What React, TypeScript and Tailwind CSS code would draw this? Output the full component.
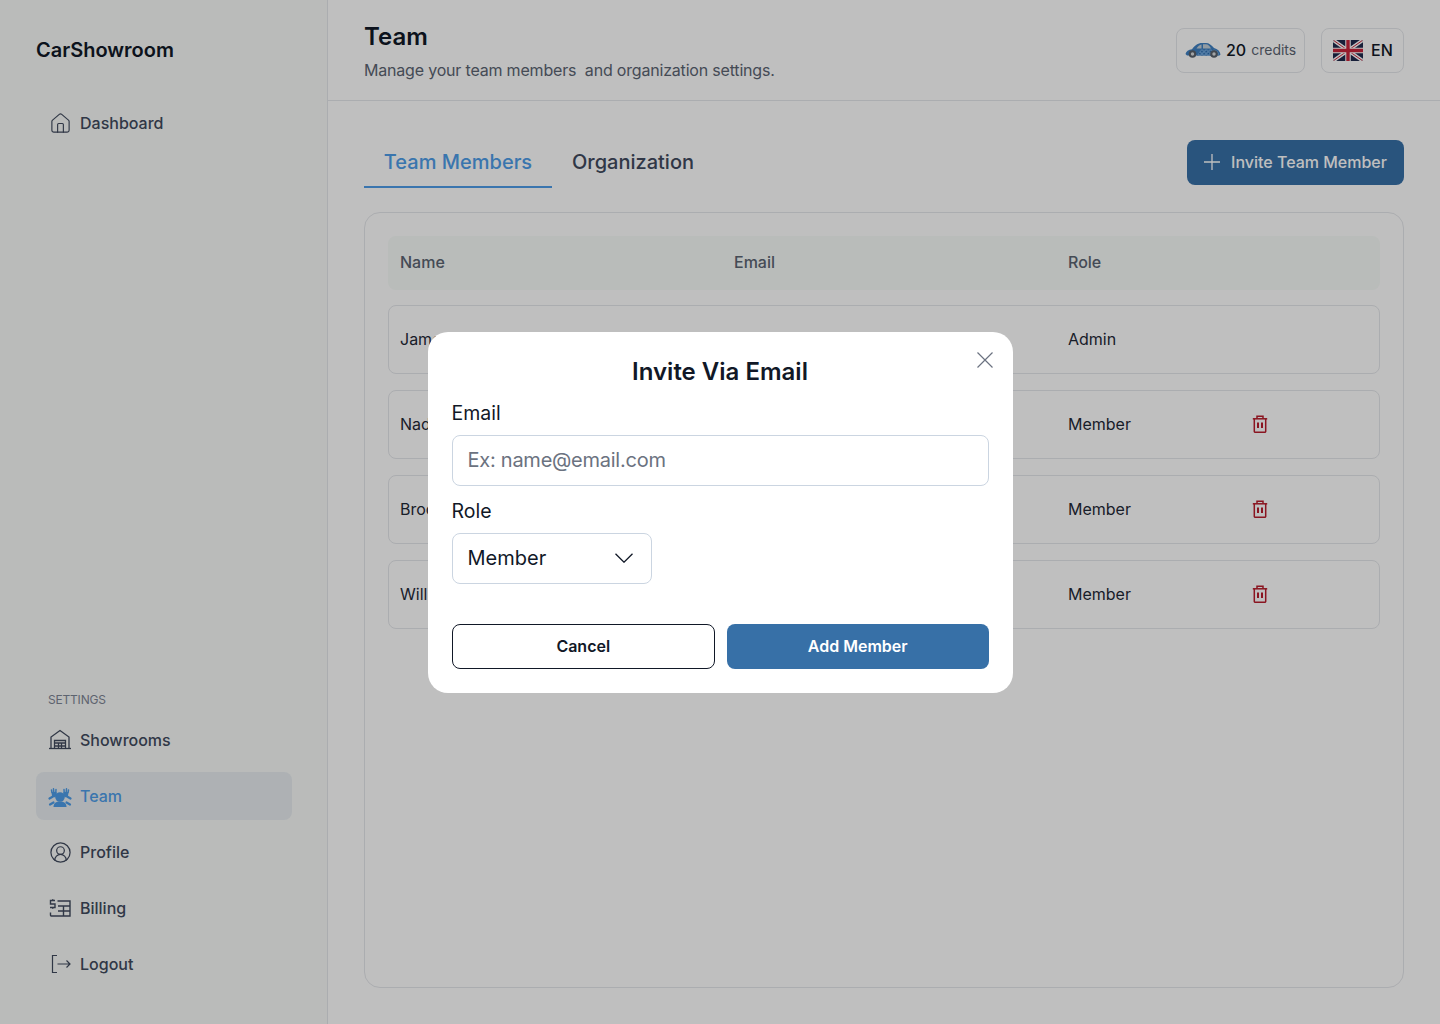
import { CircleUserRound, Home } from 'lucide-react'
import type { ReactNode } from 'react'

const font = 'font-["Inter","Open_Sans",sans-serif]'

function GarageIcon() {
  return (
    <svg width="24" height="24" viewBox="0 0 24 24" fill="none" stroke="currentColor" strokeWidth="1.3">
      <path d="M1 20.500h22" />
      <path d="M3 20.500V9L12 2.500 21 9v11.500" />
      <path d="M6.500 20.500v-8h11v8" />
      <path d="M6.500 15h11M6.500 18h11M10.500 15v5.500M13.500 15v5.500" />
    </svg>
  )
}

function TeamIcon() {
  return (
    <svg width="24" height="24" viewBox="0 0 24 24" fill="currentColor">
      <circle cx="12" cy="13" r="4.800" />
      <path d="M5.500 23c0-3.800 2.500-5.500 6.500-5.500s6.500 1.700 6.500 5.500z" />
      <path d="M3.500 8h5l.5 3-2 2.500-3-1.500zM20.500 8h-5l-.5 3 2 2.500 3-1.500z" />
      <g fill="none" stroke="currentColor" strokeLinecap="round">
        <path strokeWidth="1.500" d="M4 8.500 3.500 6M5.800 8 5.500 4.800M7.800 8.500 8 5.500M20 8.500 20.500 6M18.200 8 18.500 4.800M16.200 8.500 16 5.500" />
        <path strokeWidth="2.200" d="M1.500 14.500 5 12.500M22.500 14.500 19 12.500" />
        <path strokeWidth="2.200" d="M2 20.500 5.500 18.500M22 20.500 18.500 18.500" />
      </g>
    </svg>
  )
}

function BillingIcon() {
  return (
    <svg width="24" height="24" viewBox="0 0 24 24" fill="none" stroke="currentColor" strokeWidth="1.400">
      <path d="M9.500 5H22v15H3.500a1 1 0 0 1-1-1v-2.500" />
      <path d="M10 10h12M10 15h12M15.500 10v10" />
      <path d="M7 4.500H2.500v3.500H7v3.500H2" />
      <path d="M4.800 3v1.500M4.800 11.500V13" strokeWidth="1" />
    </svg>
  )
}

function LogoutIcon() {
  return (
    <svg width="24" height="24" viewBox="0 0 24 24" fill="none" stroke="currentColor" strokeWidth="1.200">
      <path d="M9 3.500H4.500v17H9" />
      <path d="M9.500 12H22M18.500 8.500 22 12l-3.500 3.500" />
    </svg>
  )
}

function TrashIcon() {
  return (
    <svg width="16" height="18" viewBox="0 0 16 18" fill="none" stroke="#b91c2c" strokeWidth="1.500">
      <path d="M.8 3.800h14.400" />
      <path d="M5 3.500V1.200h6v2.300" />
      <path d="M2.300 3.800v12.700a.8.8 0 0 0 .8.8h9.800a.8.8 0 0 0 .8-.8V3.800" />
      <path d="M6 7.500v5.500M10 7.500v5.500" strokeWidth="2" />
    </svg>
  )
}

function CarIcon() {
  return (
    <svg width="36" height="16" viewBox="0 0 36 16">
      <defs>
        <pattern id="mosaic" width="3" height="3" patternUnits="userSpaceOnUse" patternTransform="rotate(45)">
          <rect width="3" height="3" fill="#6ea6dc" />
          <rect width="1.500" height="1.500" fill="#1f5fa5" />
        </pattern>
      </defs>
      <path d="M.5 12c.5-2.500 3-4.200 6.500-4.700C9.500 3.500 13 1 17 1h4c3 0 5.500 2 8 5 3.500 1 6 3 6.500 6.500l-1 1H2z" fill="#3f80c2" />
      <path d="M16 7.500h13c2 .5 4 1.500 5 4l-.5 2H12z" fill="url(#mosaic)" />
      <path d="M11.500 6.500c1.500-2.200 3-3.700 5-4v4zM18 2.300h3c2 0 3.800 2 5 4.200h-8z" fill="#c3cfd8" />
      <circle cx="7.500" cy="12" r="3.800" fill="#59606b" />
      <circle cx="7.500" cy="12" r="1.700" fill="#d8dbde" />
      <circle cx="29" cy="12" r="3.800" fill="#59606b" />
      <circle cx="29" cy="12" r="1.700" fill="#d8dbde" />
    </svg>
  )
}

function FlagIcon() {
  return (
    <svg width="30" height="21" viewBox="0 0 30 21">
      <defs>
        <clipPath id="flagClip">
          <rect width="30" height="21" rx="2" />
        </clipPath>
      </defs>
      <g clipPath="url(#flagClip)">
        <rect width="30" height="21" fill="#1f2a4d" />
        <path d="M0 0l30 21M30 0L0 21" stroke="#fff" strokeWidth="3.600" />
        <path d="M0 0l30 21M30 0L0 21" stroke="#c8233a" strokeWidth="1" />
        <path d="M15 0v21M0 10.500h30" stroke="#fff" strokeWidth="5.500" />
        <path d="M15 0v21M0 10.500h30" stroke="#c8233a" strokeWidth="3.400" />
      </g>
    </svg>
  )
}

function NavItem({ icon, label, active }: { icon: ReactNode; label: string; active?: boolean }) {
  return (
    <div
      className={`flex h-12 items-center gap-2 rounded-lg pl-3 text-base font-medium ${
        active ? 'bg-[#e8edf1] text-[#4e9de8]' : 'text-[#414a5e]'
      }`}
    >
      <span className="flex h-6 w-6 items-center justify-center">{icon}</span>
      {label}
    </div>
  )
}

const members = [
  { name: 'James Carter', email: 'james@carshowroom.com', role: 'Admin' },
  { name: 'Nadia Rahman', email: 'nadia@carshowroom.com', role: 'Member' },
  { name: 'Brock Allen', email: 'brock@carshowroom.com', role: 'Member' },
  { name: 'William Reed', email: 'william@carshowroom.com', role: 'Member' },
]

export default function App() {
  return (
    <div className={`flex h-[1024px] w-[1440px] overflow-hidden bg-white text-[#111827] ${font}`}>
      <aside className="flex w-[328px] shrink-0 flex-col justify-between border-r border-[#e5e7eb] bg-[#f8faf8] pt-9 pb-9 pl-9 pr-[35px]">
        <div>
          <div className="text-xl leading-7 font-semibold">CarShowroom</div>
          <div className="mt-[35px]">
            <NavItem icon={<Home size={23} strokeWidth={1.2} />} label="Dashboard" />
          </div>
        </div>
        <div>
          <div className="pl-3 text-xs leading-4 tracking-[-0.2px] text-[#7d8494]">SETTINGS</div>
          <div className="mt-2 flex flex-col gap-2">
            <NavItem icon={<GarageIcon />} label="Showrooms" />
            <NavItem icon={<TeamIcon />} label="Team" active />
            <NavItem icon={<CircleUserRound size={23} strokeWidth={1.3} />} label="Profile" />
            <NavItem icon={<BillingIcon />} label="Billing" />
            <NavItem icon={<LogoutIcon />} label="Logout" />
          </div>
        </div>
      </aside>

      <div className="flex min-w-0 flex-1 flex-col">
        <header className="flex h-[101px] shrink-0 items-center justify-between border-b border-[#e5e7eb] px-9">
          <div className="pt-[3px]">
            <h1 className="text-2xl leading-8 font-semibold">Team</h1>
            <p className="mt-[5px] text-base leading-6 tracking-[-0.19px] whitespace-pre text-[#5b6472]">Manage your team members  and organization settings.</p>
          </div>
          <div className="flex gap-4">
            <div className="flex h-[45px] w-[129px] items-center rounded-lg border border-[#e5e7eb] pl-2">
              <CarIcon />
              <span className="ml-[5px] text-base font-medium">20</span>
              <span className="ml-[5px] text-sm text-[#5b6472]">credits</span>
            </div>
            <div className="flex h-[45px] w-[83px] items-center gap-2 rounded-lg border border-[#e5e7eb] pl-[11px]">
              <FlagIcon />
              <span className="text-base font-medium">EN</span>
            </div>
          </div>
        </header>

        <main className="flex min-h-0 flex-1 flex-col px-9 pt-[39px] pb-9">
          <div className="flex h-12 items-start justify-between">
            <div className="flex">
              <div className="flex h-12 w-[188px] items-center justify-center border-b-2 border-[#4e9de8] pb-[2px] text-xl font-medium text-[#4e9de8]">
                Team Members
              </div>
              <div className="flex h-12 items-center px-5 pb-1 text-xl font-medium text-[#414a5e]">Organization</div>
            </div>
            <button className="flex h-[45px] w-[217px] items-center justify-center gap-[11px] rounded-lg bg-[#3770a7] pb-[1px] text-base font-medium text-white">
              <svg width="16" height="16" viewBox="0 0 16 16" stroke="currentColor" strokeWidth="1.300">
                <path d="M8 0v16M0 8h16" />
              </svg>
              Invite Team Member
            </button>
          </div>

          <section className="mt-6 min-h-0 flex-1 rounded-2xl border border-[#e5e7eb] p-[23px]">
            <div className="grid h-[54px] grid-cols-[334px_334px_1fr] items-center rounded-lg bg-[#f7fbf8] px-3 pb-[2px] text-base font-medium text-[#5b6472]">
              <div>Name</div>
              <div>Email</div>
              <div>Role</div>
            </div>
            <div className="mt-[15px] flex flex-col gap-4">
              {members.map((m) => (
                <div key={m.name} className="grid h-[69px] grid-cols-[334px_334px_1fr] items-center rounded-lg border border-[#e5e7eb] px-[11px] pb-[2px] text-base text-[#1f2937]">
                  <div>{m.name}</div>
                  <div>{m.email}</div>
                  <div className="flex items-center">
                    <span className="w-[184px]">{m.role}</span>
                    {m.role !== 'Admin' && <TrashIcon />}
                  </div>
                </div>
              ))}
            </div>
          </section>
        </main>
      </div>

      {/* Modal */}
      <div className="fixed inset-0 flex items-center justify-center bg-black/25">
        <div className="relative w-[585px] rounded-[20px] bg-white p-6">
          <button className="absolute top-[20px] right-[20px] text-[#6b7280]">
            <svg width="16" height="16" viewBox="0 0 16 16" stroke="currentColor" strokeWidth="1.200" className="block">
              <path d="M.5.500l15 15M15.500.500l-15 15" />
            </svg>
          </button>
          <h2 className="text-center text-2xl leading-8 font-semibold">Invite Via Email</h2>
          <div className="mt-[11px] text-[19.5px] leading-7">Email</div>
          <div className="mt-2 flex h-[51px] items-center rounded-lg border border-[#cbd5e1] px-[15px] text-xl tracking-[-0.25px] text-[#6b7280]">Ex: name@email.com</div>
          <div className="mt-[11px] text-[19.5px] leading-7">Role</div>
          <div className="mt-2 flex h-[51px] w-[200px] items-center justify-between rounded-lg border border-[#cbd5e1] pr-[18px] pl-[15px] text-xl">
            Member
            <svg width="18" height="10" viewBox="0 0 18 10" fill="none" stroke="currentColor" strokeWidth="1.300">
              <path d="M.5.700 9 9.200 17.500.700" />
            </svg>
          </div>
          <div className="mt-10 flex gap-3">
            <button className="h-[45px] flex-1 rounded-lg border border-[#111827] text-base font-semibold">Cancel</button>
            <button className="h-[45px] flex-1 rounded-lg bg-[#3770a7] text-base font-semibold text-white">Add Member</button>
          </div>
        </div>
      </div>
    </div>
  )
}
